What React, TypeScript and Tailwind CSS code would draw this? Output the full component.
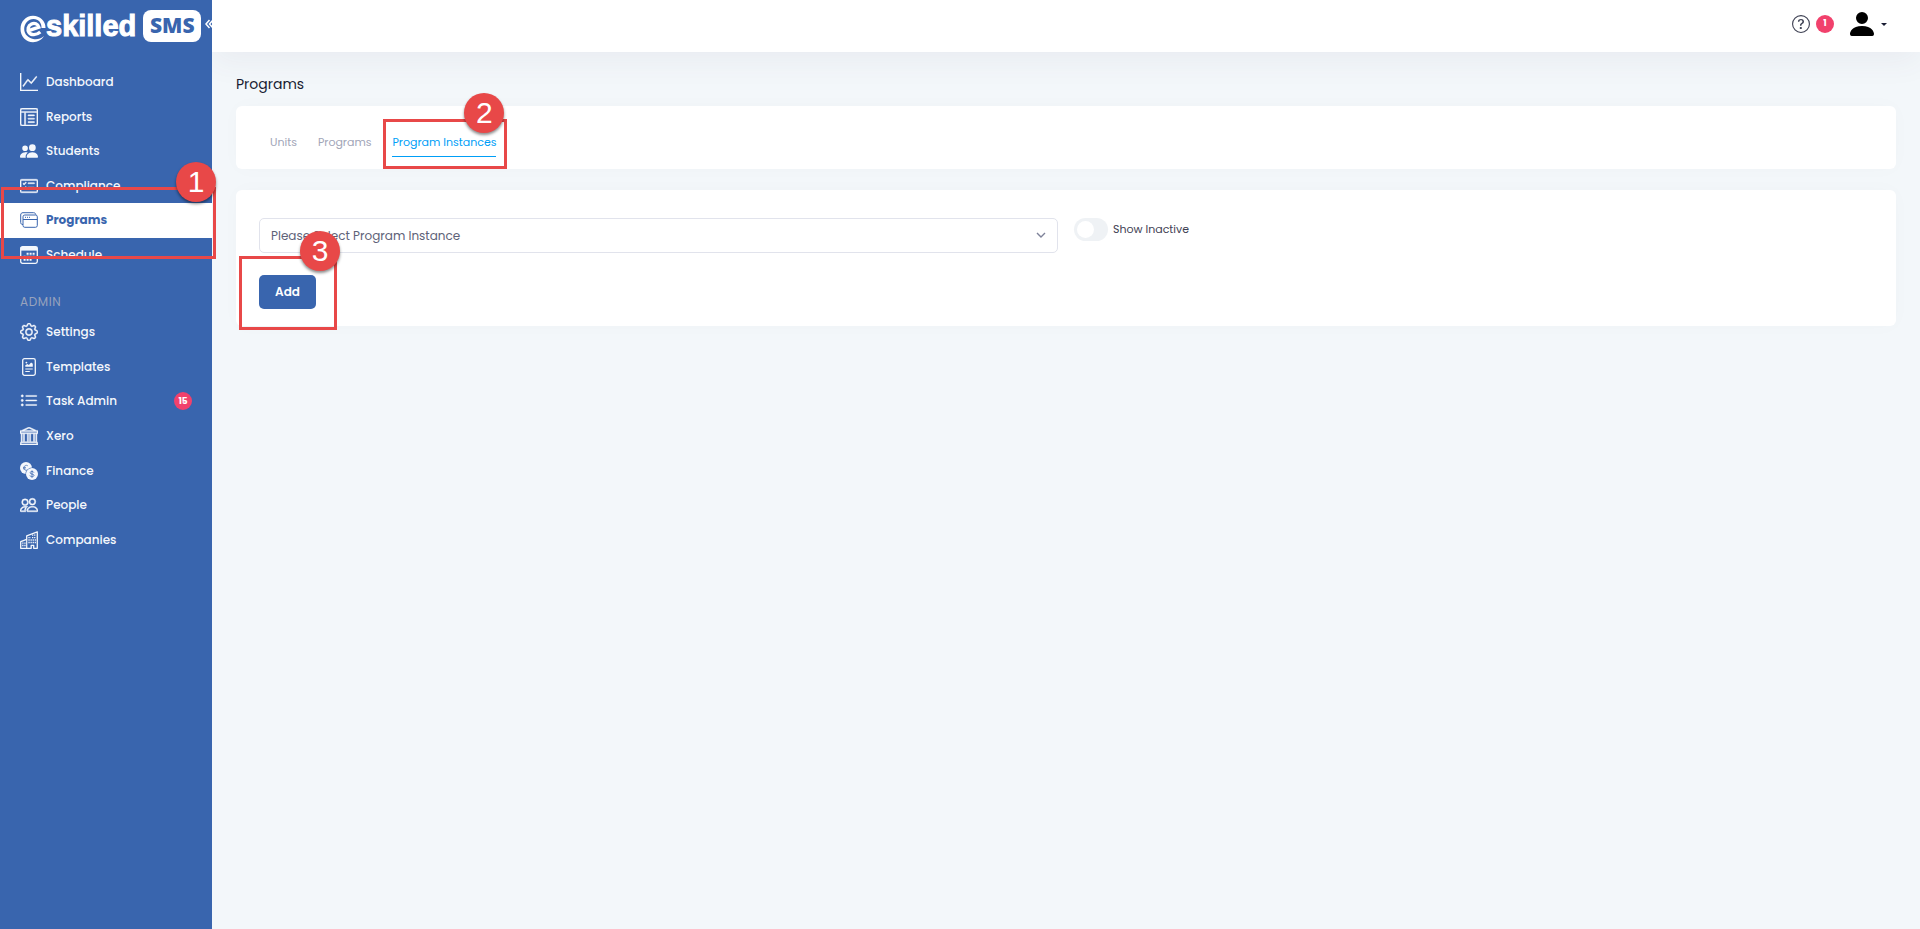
import { useState } from "react";
import type { ReactNode } from "react";
import type { IconType } from "react-icons";
import {
  BsBank,
  BsCardChecklist,
  BsGear,
  BsGraphUp,
  BsLayoutTextWindowReverse,
  BsListUl,
  BsPeople,
  BsPeopleFill,
  BsPersonFill,
  BsQuestionCircle,
} from "react-icons/bs";

interface NavItem {
  label: string;
  icon: IconType | typeof CoinsIcon;
  active?: boolean;
  badge?: number;
}

function CoinsIcon({ size = 18 }: { size?: number }) {
  return (
    <svg width={size} height={size} viewBox="0 0 18 18" fill="none">
      <circle cx="6" cy="6" r="6" fill="currentColor" />
      <path
        d="M7.8 3.8a2.5 2.5 0 1 0-.6 4.4M3 5.4h3M3 6.8h2.5"
        stroke="#3965ae"
        strokeWidth="0.7"
      />
      <circle cx="12" cy="12" r="6.5" fill="#3965ae" />
      <circle cx="12" cy="12" r="6" fill="currentColor" />
      <path
        d="M13.9 10.6c-.2-.7-.9-1.1-1.9-1.1s-1.9.5-1.9 1.3c0 1.8 3.9.7 3.9 2.6 0 .8-.9 1.3-2 1.3s-1.9-.5-2.1-1.3M12 8.4v7.3"
        stroke="#3965ae"
        strokeWidth="0.8"
      />
    </svg>
  );
}

function WindowsIcon({ size = 18 }: { size?: number }) {
  return (
    <svg width={size} height={size} viewBox="0 0 18 18" fill="none" stroke="currentColor">
      <path d="M3 13.5C1.5 13.5.7 12.8.7 11.5V4C.7 2.5 1.5 1.7 3 1.7h10.5c1.3 0 2.1.7 2.3 2" />
      <rect x="3" y="4" width="14.3" height="12.3" rx="1.8" />
      <path d="M3 8.5h14.3M5 6.3h1M7 6.3h1M9 6.3h1" />
    </svg>
  );
}

function CalendarIcon({ size = 18 }: { size?: number }) {
  return (
    <svg width={size} height={size} viewBox="0 0 18 18" fill="none">
      <rect x="0.7" y="0.7" width="16.6" height="16.6" rx="1.8" stroke="currentColor" strokeWidth="1.3" />
      <path d="M.7 1h16.6v3.6H.7z" fill="currentColor" />
      <path
        d="M6.6 7.8h8.4M3.6 10.8h11.4M3.6 13.8h8.4"
        stroke="currentColor"
        strokeWidth="2"
        strokeDasharray="2 1"
      />
    </svg>
  );
}

function TemplateIcon({ size = 18 }: { size?: number }) {
  return (
    <svg width={size} height={size} viewBox="0 0 18 18" fill="none" stroke="currentColor">
      <rect x="2.7" y="0.7" width="12.6" height="16.6" rx="1.8" strokeWidth="1.3" />
      <path d="M5.3 8.8V7.2l2-1.2 1.6 1 2.2-2.4 1.7 1.2v3z" fill="currentColor" stroke="none" />
      <circle cx="6.4" cy="4.6" r="0.9" fill="currentColor" stroke="none" />
      <path d="M5.3 11h7.4M5.3 13.5h4.5" strokeWidth="1.2" />
    </svg>
  );
}

function BuildingsIcon({ size = 18 }: { size?: number }) {
  return (
    <svg width={size} height={size} viewBox="0 0 18 18" fill="none" stroke="currentColor">
      <path
        d="M.7 17.3V10.7L6.7 8.3V4.8L17.3.8v16.5h-3.6v-3h-2.5v3z"
        strokeWidth="1.3"
        strokeLinejoin="round"
      />
      <path d="M6.7 8.3v9" strokeWidth="1.2" />
      <path
        d="M2.2 12.2h3.5M2.2 14.5h3.5M8.4 6.6h2.5M8.4 9h7.5M8.4 11.5h7.5M12 4.2h3.9M12 6.6h3.9"
        strokeWidth="1.3"
        strokeDasharray="1.3 0.8"
      />
    </svg>
  );
}

const mainNav: NavItem[] = [
  { label: "Dashboard", icon: BsGraphUp },
  { label: "Reports", icon: BsLayoutTextWindowReverse },
  { label: "Students", icon: BsPeopleFill },
  { label: "Compliance", icon: BsCardChecklist },
  { label: "Programs", icon: WindowsIcon, active: true },
  { label: "Schedule", icon: CalendarIcon },
];

const adminNav: NavItem[] = [
  { label: "Settings", icon: BsGear },
  { label: "Templates", icon: TemplateIcon },
  { label: "Task Admin", icon: BsListUl, badge: 15 },
  { label: "Xero", icon: BsBank },
  { label: "Finance", icon: CoinsIcon },
  { label: "People", icon: BsPeople },
  { label: "Companies", icon: BuildingsIcon },
];

// Outline glyphs from the icon set are hairline thin at 18px
const thinIcons: NavItem["icon"][] = [
  BsGraphUp,
  BsLayoutTextWindowReverse,
  BsCardChecklist,
  BsGear,
  BsListUl,
  BsBank,
  BsPeople,
];

const tabs = ["Units", "Programs", "Program Instances"];

// Numbered marker that sits on the corner of a highlighted area
function Step({ children, className }: { children: ReactNode; className: string }) {
  return (
    <span
      className={`absolute z-20 flex size-10 items-center justify-center rounded-full bg-[#e84848] font-['Liberation_Sans',sans-serif] text-[30px] leading-none font-normal text-white shadow-[0_2px_3px_rgba(0,0,0,0.45)] ${className}`}
    >
      {children}
    </span>
  );
}

function Highlight({ className }: { className: string }) {
  return (
    <span
      className={`pointer-events-none absolute z-10 border-3 border-[#e84848] ${className}`}
    />
  );
}

function Logo() {
  return (
    <div className="flex h-[52px] items-center pb-px pl-5">
      <a href="#" className="flex items-center text-white" aria-label="eskilled SMS">
        <span className="flex items-center pt-0.5 font-['Liberation_Sans',sans-serif] text-[29px] leading-none font-bold [-webkit-text-stroke:1px_white]">
          <svg width="26" height="28" viewBox="0 0 26 28" fill="none" className="mt-1">
            <path
              d="M8 15.8L18.8 12.2C17.8 8.8 14.5 7.6 11.5 9C8 10.6 7.2 14.8 9 17.5C11.2 20.6 16.3 20.3 20.3 17"
              stroke="currentColor"
              strokeWidth="3.4"
            />
            <path
              d="M25.5 13C25.5 5.8 20 .8 13 .8C5.8.8.5 6.8.5 14C.5 21.5 6 27.2 13 27.2C17.6 27.2 21.500 25 24 21C21 23.6 17.8 24.6 14.3 24.2C8.600 23.6 4.2 19.3 4.2 14C4.200 8.4 8.2 3.900 13.6 3.9C18.5 3.900 21.800 7.8 21.500 13Z"
              fill="currentColor"
            />
          </svg>
          skilled
        </span>
        <span className="ml-[7px] flex h-8 w-[58px] items-center justify-center rounded-lg bg-white font-['Open_Sans',sans-serif] text-[21px] leading-none font-extrabold text-[#3965ae]">
          SMS
        </span>
      </a>
      <button type="button" aria-label="Collapse menu" className="ml-1 shrink-0 pb-1 text-white">
        <svg width="8" height="10" viewBox="0 0 8 10" fill="none" stroke="currentColor" strokeWidth="1.5">
          <path d="M4.5 1L1 5l3.5 4M8 1L4.5 5L8 9" />
        </svg>
      </button>
    </div>
  );
}

function NavLink({ item }: { item: NavItem }) {
  const Icon = item.icon;
  return (
    <li className="relative">
      <a
        href="#"
        className={`flex h-full items-center gap-2 px-5 text-[12px] ${
          item.active ? "bg-white font-bold text-[#3965ae]" : "font-medium text-[#f4f7fc]"
        }`}
      >
        <span className={thinIcons.includes(item.icon) ? "[&_path]:stroke-current [&_path]:[stroke-width:0.4px]" : ""}>
          <Icon size={18} />
        </span>
        <span>{item.label}</span>
        {item.badge && (
          <span className="ml-auto flex size-[18px] items-center justify-center rounded-full bg-[#f1416c] text-[9px] font-bold text-white">
            {item.badge}
          </span>
        )}
      </a>
      {item.active && (
        <>
          <Highlight className="-top-4 -right-1 -bottom-[21px] left-px" />
          <Step className="-top-[41px] -right-1">1</Step>
        </>
      )}
    </li>
  );
}

export default function App() {
  const [tab, setTab] = useState("Program Instances");
  const [showInactive, setShowInactive] = useState(false);

  return (
    <div className="flex min-h-screen bg-[#f3f7fa] font-[Poppins,Inter,sans-serif]">
      {/* Sidebar */}
      <aside className="relative z-10 w-[212px] shrink-0 bg-[#3965ae]">
        <Logo />
        <nav className="pt-[13px]">
          <ul className="grid h-[207px] grid-rows-6">
            {mainNav.map((item) => (
              <NavLink key={item.label} item={item} />
            ))}
          </ul>
          <h2 className="mt-[21px] mb-1 pl-5 text-[12px] leading-[18px] tracking-wider text-[#98a3bd]">
            ADMIN
          </h2>
          <ul className="grid h-[242px] grid-rows-7">
            {adminNav.map((item) => (
              <NavLink key={item.label} item={item} />
            ))}
          </ul>
        </nav>
      </aside>

      <div className="min-w-0 flex-1">
        {/* Top bar */}
        <header className="flex h-[52px] items-center justify-end bg-white pr-[33px] pb-1 shadow-[0_10px_30px_rgba(82,63,105,0.06)]">
          <button type="button" aria-label="Help" className="text-[#3f4254]">
            <BsQuestionCircle size={18} />
          </button>
          <span className="ml-1.5 flex size-[18px] items-center justify-center rounded-full bg-[#f1416c] text-[9px] font-bold text-white">
            1
          </span>
          <button type="button" aria-label="Account" className="ml-3 flex items-center gap-[3px]">
            <BsPersonFill size={32} className="text-black" />
            <svg width="6" height="3" viewBox="0 0 6 3" className="text-[#181c32]">
              <path d="M0 0h6L3 3z" fill="currentColor" />
            </svg>
          </button>
        </header>

        <main className="px-6 pt-5">
          <h1 className="text-[14px] leading-6 text-[#181c32]">Programs</h1>

          {/* Tabs */}
          <section className="mt-2.5 h-[63px] rounded-md bg-white px-[34px] pt-[22px] shadow-[0_0_20px_rgba(76,87,125,0.02)]">
            <div role="tablist" className="flex gap-[21px]">
              {tabs.map((t) => (
                <div key={t} className="relative">
                  <button
                    type="button"
                    role="tab"
                    aria-selected={tab === t}
                    onClick={() => setTab(t)}
                    className={`block h-[29px] border-b text-[11px] leading-7 ${
                      tab === t
                        ? "border-[#009ef7] text-[#009ef7]"
                        : "border-transparent text-[#a1a5b7]"
                    }`}
                  >
                    {t}
                  </button>
                  {t === "Program Instances" && (
                    <>
                      <Highlight className="-top-[9px] -right-[11px] -bottom-3 -left-[9px]" />
                      <Step className="-top-[35px] -right-2">2</Step>
                    </>
                  )}
                </div>
              ))}
            </div>
          </section>

          {/* Instance picker */}
          <section className="mt-[21px] rounded-md bg-white px-[23px] pt-7 pb-[17px] shadow-[0_0_20px_rgba(76,87,125,0.02)]">
            <div className="grid grid-cols-2 gap-4">
              <div className="relative">
                <select
                  aria-label="Program instance"
                  className="block h-[35px] w-full appearance-none rounded-[5px] border border-[#e1e3ec] bg-white px-[11px] text-[12px] text-[#5e6278]"
                >
                  <option>Please Select Program Instance</option>
                </select>
                <svg
                  className="pointer-events-none absolute top-3.5 right-3 text-[#7e8299]"
                  width="10"
                  height="6"
                  viewBox="0 0 10 6"
                  fill="none"
                  stroke="currentColor"
                  strokeWidth="1.4"
                >
                  <path d="M1 1l4 4 4-4" />
                </svg>
              </div>
              <label className="flex h-[23px] items-center gap-[5px] text-[11px] text-[#3f4254]">
                <input
                  type="checkbox"
                  checked={showInactive}
                  onChange={(e) => setShowInactive(e.target.checked)}
                  className="peer sr-only"
                />
                <span className="flex h-[23px] w-[34px] items-center rounded-full bg-[#eff2f5] px-[3px] peer-checked:justify-end peer-checked:bg-[#009ef7]">
                  <span className="size-[17px] rounded-full bg-white" />
                </span>
                Show Inactive
              </label>
            </div>
            <div className="relative mt-[22px] w-fit">
              <button
                type="button"
                className="block h-[34px] w-[57px] rounded-[5px] bg-[#3965ae] text-[12px] font-semibold text-white"
              >
                Add
              </button>
              <Highlight className="-top-[19px] -right-[21px] -bottom-[21px] -left-5" />
              <Step className="-top-11 -right-6">3</Step>
            </div>
          </section>
        </main>
      </div>
    </div>
  );
}
